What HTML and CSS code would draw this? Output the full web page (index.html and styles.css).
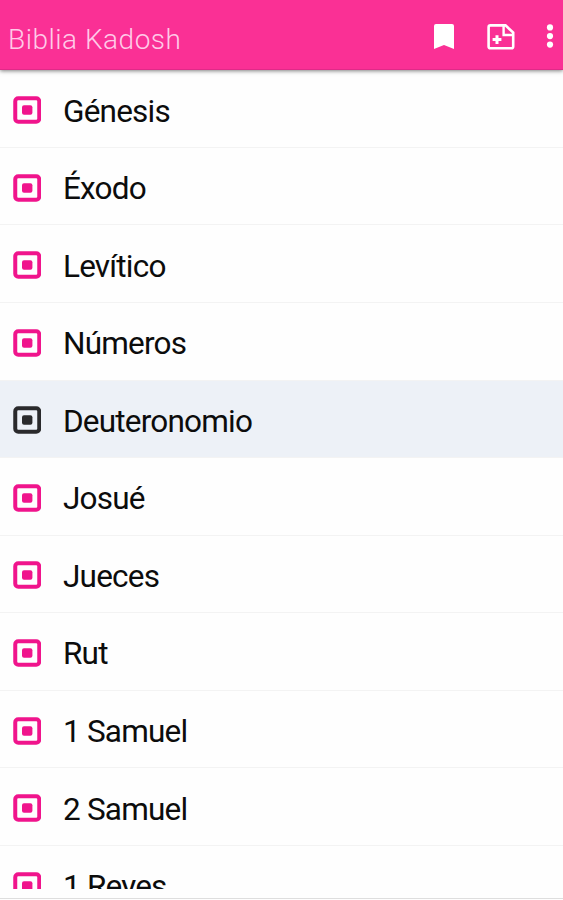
FILE: index.html
```html
<!doctype html>
<html lang="es">
  <head>
    <title>Biblia Kadosh</title>
    <meta charset="utf-8"/>
    <link rel="stylesheet" href="styles.css">
  </head>
  <body>
    <!-- icon used by every book in the list -->
    <svg class="sprite" width="0" height="0">
      <symbol id="book" viewBox="0 0 28 28">
        <rect x="2.25" y="2.25" width="24" height="23.5" rx="3" fill="none" stroke="currentColor" stroke-width="4"/>
        <rect x="9" y="9.3" width="10.4" height="9.4" rx="2" fill="currentColor"/>
      </symbol>
    </svg>

    <div id="wrapper">
      <header class="toolbar">
        <h1>Biblia Kadosh</h1>
        <svg class="bookmark" width="20" height="26" viewBox="0 0 20 26">
          <path d="M2 0H18Q20 0 20 2V25L10 21L0 25V2Q0 0 2 0Z" fill="#fff"/>
        </svg>
        <svg class="note" width="28" height="26" viewBox="0 0 28 26">
          <path d="M3.4 1.4H18.5L26.2 8.6V22.4Q26.2 24.2 24.4 24.2H3.4Q1.6 24.2 1.6 22.4V3.2Q1.6 1.4 3.4 1.4Z" fill="none" stroke="#fff" stroke-width="2.6"/>
          <path d="M16.6 2V11H26" fill="none" stroke="#fff" stroke-width="2.4"/>
          <path d="M10 11.2V20M5.6 15.6H14.4" stroke="#fff" stroke-width="3"/>
        </svg>
        <svg class="more" width="8" height="26" viewBox="0 0 8 26">
          <circle cx="4" cy="3.4" r="3.1" fill="#fff"/>
          <circle cx="4" cy="12.1" r="3.1" fill="#fff"/>
          <circle cx="4" cy="20.6" r="3.1" fill="#fff"/>
        </svg>
      </header>

      <ul class="books">
        <li><svg><use href="#book"/></svg><span>Génesis</span></li>
        <li><svg><use href="#book"/></svg><span>Éxodo</span></li>
        <li><svg><use href="#book"/></svg><span>Levítico</span></li>
        <li><svg><use href="#book"/></svg><span>Números</span></li>
        <li class="selected"><svg><use href="#book"/></svg><span>Deuteronomio</span></li>
        <li><svg><use href="#book"/></svg><span>Josué</span></li>
        <li><svg><use href="#book"/></svg><span>Jueces</span></li>
        <li><svg><use href="#book"/></svg><span>Rut</span></li>
        <li><svg><use href="#book"/></svg><span>1 Samuel</span></li>
        <li><svg><use href="#book"/></svg><span>2 Samuel</span></li>
        <li><svg><use href="#book"/></svg><span>1 Reyes</span></li>
      </ul>
      <div class="bottom"></div>
    </div>
  </body>
</html>
```

FILE: styles.css
```css
*{
  box-sizing: border-box;
}
body{
  margin: 0;
  background-color: #fefefe;
  font-family: Roboto, sans-serif;
}
.sprite{
  position: absolute;
}
#wrapper{
  display: flex;
  flex-direction: column;
  height: 900px;
  overflow: hidden;
}

/* top bar */
.toolbar{
  display: flex;
  flex: none;
  align-items: flex-start;
  position: relative;
  height: 70px;
  padding: 24px 9px 0 8px;
  background-color: #fa3095;
  border-bottom: 1px solid #e02a88;
  box-shadow: 0 1px 4px rgba(0, 0, 0, 0.5);
}
.toolbar h1{
  flex: 1;
  margin: 0;
  color: #ffcbe8;
  font-size: 28px;
  font-weight: 300;
  line-height: 32px;
  letter-spacing: 0.5px;
}
.bookmark{
  margin-right: 33px;
}
.note{
  margin-right: 31px;
}

/* list of books */
.books{
  height: 819px;
  margin: 0;
  padding: 0.4px 0 0;
  overflow: hidden;
  list-style: none;
}
.books li{
  display: flex;
  align-items: center;
  height: 77.55px;
  padding: 3px 13px 0;
  border-bottom: 1px solid #f3f3f3;
  color: #0c0c0c;
  font-size: 31.5px;
  letter-spacing: -0.8px;
}
.books svg{
  width: 28px;
  height: 28px;
  margin-right: 22px;
  color: #f0148c;
}
.books span{
  padding-top: 2px;
}
.books .selected{
  background-color: #edf1f7;
}
.books .selected svg{
  color: #2a2a2c;
}
.bottom{
  height: 10px;
  border-bottom: 1px solid #dedede;
}
```
